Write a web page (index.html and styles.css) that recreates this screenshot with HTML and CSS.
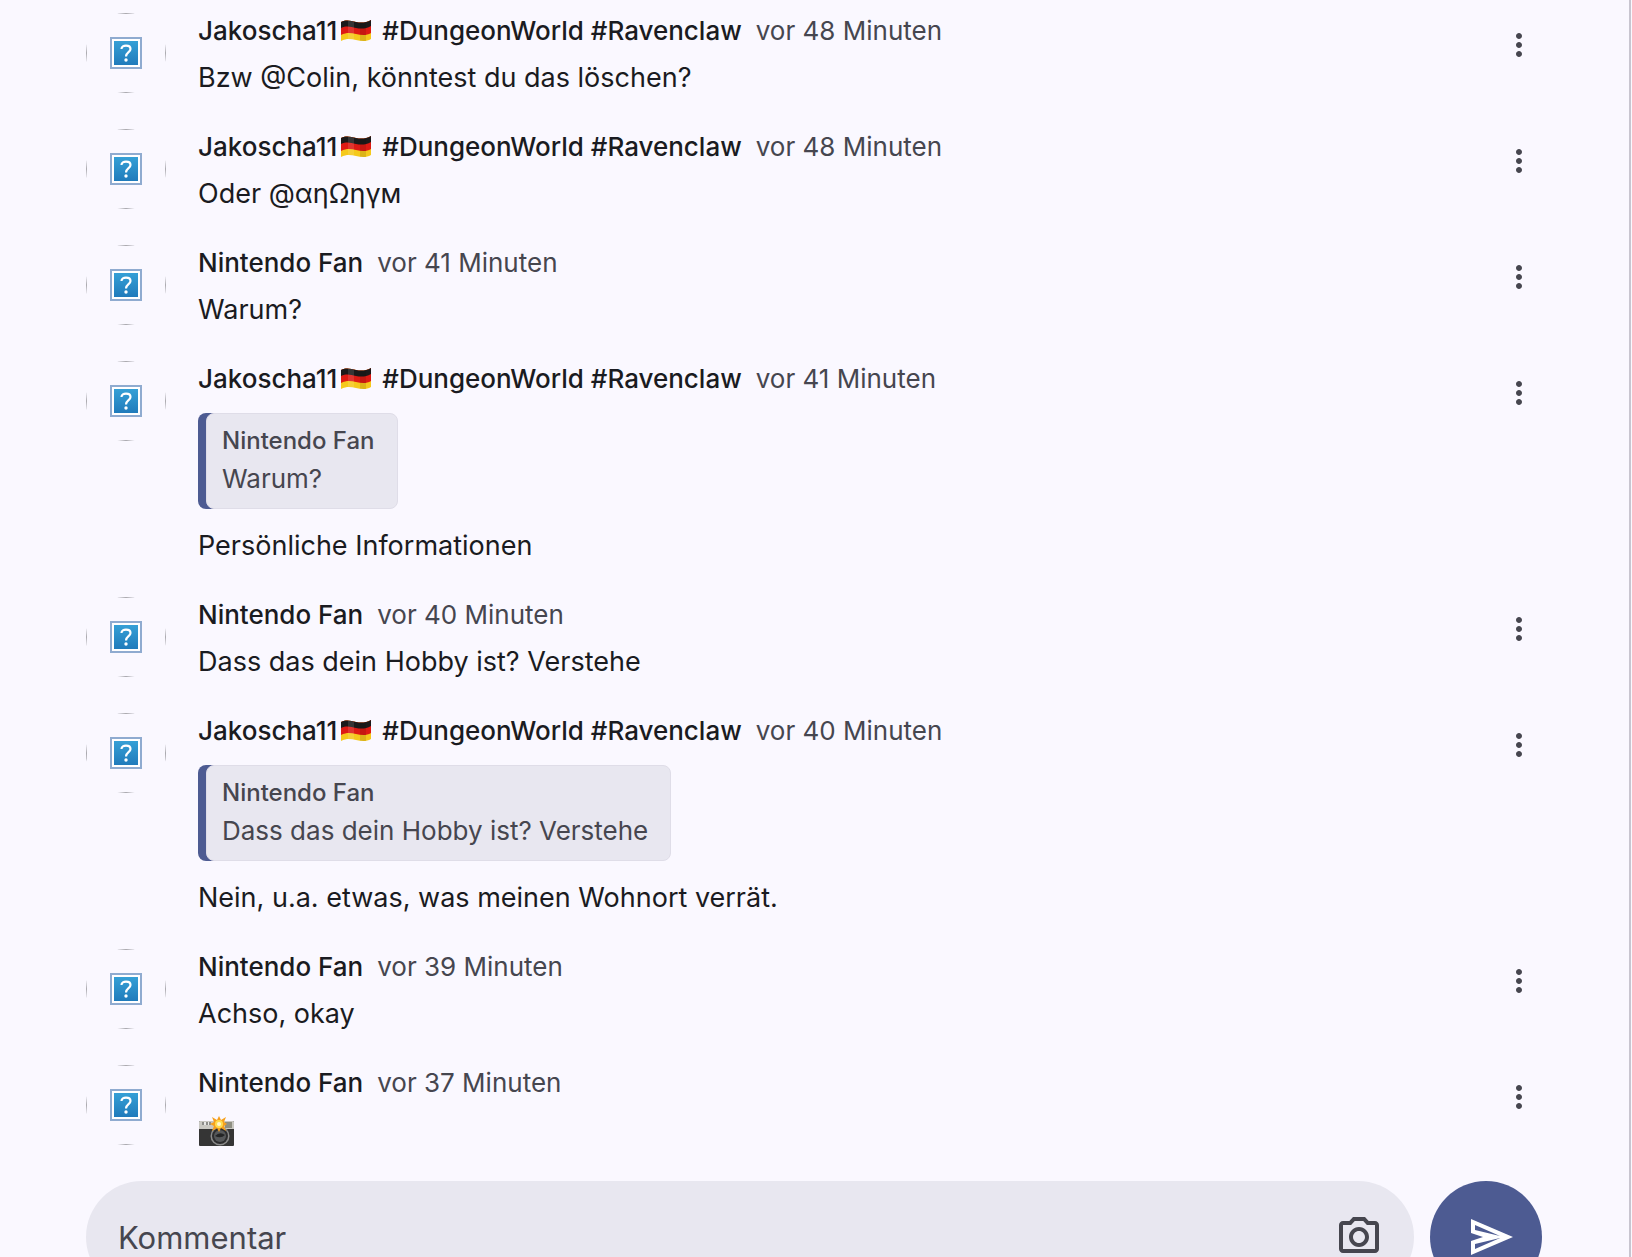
FILE: index.html
```html
<!DOCTYPE html>
<html lang="de">
<head>
  <meta charset="UTF-8">
  <meta name="viewport" content="width=device-width, initial-scale=1.0">
  <title>Kommentare</title>
  <link rel="stylesheet" href="styles.css">
</head>
<body>
  <!-- Symbole -->
  <svg class="sprite" aria-hidden="true">
    <defs>
      <linearGradient id="sky" x1="0" y1="0" x2="0" y2="1">
        <stop offset="0" stop-color="#35a0d6" />
        <stop offset="1" stop-color="#207bbb" />
      </linearGradient>
      <clipPath id="flag-shape">
        <path d="M0 2C6 -1 10 1 15 2C20 3 25 3 30 0V19C25 22 20 21 15 20C10 19 6 18 0 21Z" />
      </clipPath>
    </defs>
    <symbol id="missing" viewBox="0 0 32 32">
      <rect width="32" height="32" fill="#8fabd0" />
      <rect x="2" y="2" width="28" height="28" fill="#fff" />
      <rect x="4" y="4" width="24" height="24" fill="url(#sky)" />
      <path d="M11.500 12C11.500 7.500 20.500 7.500 20.500 12C20.500 15.200 16 15 16 19.500" fill="none" stroke="#fff" stroke-width="2.200" />
      <circle cx="16" cy="23" r="1.700" fill="#fff" />
    </symbol>
    <symbol id="flag" viewBox="0 0 30 22">
      <g clip-path="url(#flag-shape)">
        <rect width="30" height="22" fill="#f5c91c" />
        <path d="M0 0H30V13C25 16 20 15 15 14C10 13 6 12 0 15Z" fill="#dd1a14" />
        <path d="M0 0H30V6C25 9 20 9 15 8C10 7 6 5 0 8Z" fill="#1c1a1a" />
        <path d="M7 0H13V22H7Z" fill="#fff" opacity="0.120" />
        <path d="M19 0H25V22H19Z" fill="#000" opacity="0.100" />
      </g>
    </symbol>
    <symbol id="more" viewBox="0 0 24 24">
      <path d="M12 8c1.100 0 2-.9 2-2s-.9-2-2-2-2 .9-2 2 .9 2 2 2zm0 2c-1.100 0-2 .9-2 2s.9 2 2 2 2-.9 2-2-.9-2-2-2zm0 6c-1.100 0-2 .9-2 2s.9 2 2 2 2-.9 2-2-.9-2-2-2z" />
    </symbol>
  </svg>

  <main class="page">
    <section class="comments">
      <article class="comment">
        <div class="avatar"><span class="avatar-frame"><svg><use href="#missing" /></svg></span></div>
        <div class="content">
          <header><strong>Jakoscha11<svg class="flag"><use href="#flag" /></svg> #DungeonWorld #Ravenclaw</strong><time>vor 48 Minuten</time></header>
          <p>Bzw @Colin, könntest du das löschen?</p>
        </div>
        <button class="more" aria-label="Mehr"><svg><use href="#more" /></svg></button>
      </article>

      <article class="comment">
        <div class="avatar"><span class="avatar-frame"><svg><use href="#missing" /></svg></span></div>
        <div class="content">
          <header><strong>Jakoscha11<svg class="flag"><use href="#flag" /></svg> #DungeonWorld #Ravenclaw</strong><time>vor 48 Minuten</time></header>
          <p>Oder @αηΩηγм</p>
        </div>
        <button class="more" aria-label="Mehr"><svg><use href="#more" /></svg></button>
      </article>

      <article class="comment">
        <div class="avatar"><span class="avatar-frame"><svg><use href="#missing" /></svg></span></div>
        <div class="content">
          <header><strong>Nintendo Fan</strong><time>vor 41 Minuten</time></header>
          <p>Warum?</p>
        </div>
        <button class="more" aria-label="Mehr"><svg><use href="#more" /></svg></button>
      </article>

      <article class="comment">
        <div class="avatar"><span class="avatar-frame"><svg><use href="#missing" /></svg></span></div>
        <div class="content">
          <header><strong>Jakoscha11<svg class="flag"><use href="#flag" /></svg> #DungeonWorld #Ravenclaw</strong><time>vor 41 Minuten</time></header>
          <blockquote>
            <div class="quote">
              <cite>Nintendo Fan</cite>
              <span>Warum?</span>
            </div>
          </blockquote>
          <p>Persönliche Informationen</p>
        </div>
        <button class="more" aria-label="Mehr"><svg><use href="#more" /></svg></button>
      </article>

      <article class="comment">
        <div class="avatar"><span class="avatar-frame"><svg><use href="#missing" /></svg></span></div>
        <div class="content">
          <header><strong>Nintendo Fan</strong><time>vor 40 Minuten</time></header>
          <p>Dass das dein Hobby ist? Verstehe</p>
        </div>
        <button class="more" aria-label="Mehr"><svg><use href="#more" /></svg></button>
      </article>

      <article class="comment">
        <div class="avatar"><span class="avatar-frame"><svg><use href="#missing" /></svg></span></div>
        <div class="content">
          <header><strong>Jakoscha11<svg class="flag"><use href="#flag" /></svg> #DungeonWorld #Ravenclaw</strong><time>vor 40 Minuten</time></header>
          <blockquote>
            <div class="quote">
              <cite>Nintendo Fan</cite>
              <span>Dass das dein Hobby ist? Verstehe</span>
            </div>
          </blockquote>
          <p>Nein, u.a. etwas, was meinen Wohnort verrät.</p>
        </div>
        <button class="more" aria-label="Mehr"><svg><use href="#more" /></svg></button>
      </article>

      <article class="comment">
        <div class="avatar"><span class="avatar-frame"><svg><use href="#missing" /></svg></span></div>
        <div class="content">
          <header><strong>Nintendo Fan</strong><time>vor 39 Minuten</time></header>
          <p>Achso, okay</p>
        </div>
        <button class="more" aria-label="Mehr"><svg><use href="#more" /></svg></button>
      </article>

      <article class="comment">
        <div class="avatar"><span class="avatar-frame"><svg><use href="#missing" /></svg></span></div>
        <div class="content">
          <header><strong>Nintendo Fan</strong><time>vor 37 Minuten</time></header>
          <p class="emoji">
            <svg class="camera" viewBox="0 0 36 30" role="img" aria-label="Kamera mit Blitz">
              <rect y="5" width="35" height="25" rx="1" fill="#353535" />
              <path d="M0 6Q0 5 1 5H34Q35 5 35 6V13H0Z" fill="#c9c8c2" />
              <path d="M3 6H12V9H3Z" fill="#8d8d8a" />
              <path d="M5 6H7V9H5ZM9 6H10V9H9Z" fill="#e8e8e6" />
              <rect x="26" y="6" width="7" height="6" fill="#8f8f82" />
              <circle cx="21" cy="20" r="9.500" fill="#8b8b8b" />
              <circle cx="21" cy="20" r="8" fill="#2d2d2e" />
              <circle cx="21" cy="20" r="6" fill="#56585a" />
              <path d="M16 20Q21 15 26 19Q22 23 16 20Z" fill="#242526" />
              <path d="M20 0L22 4L27 1L25 6L28 8L25 10L27 15L22 12L20 16L18 12L13 15L15 10L11 8L15 6L13 1L18 4Z" fill="#f6a01c" />
              <circle cx="20" cy="8" r="4" fill="#ffdc4e" />
              <circle cx="20" cy="8" r="2" fill="#fff8cf" />
            </svg>
          </p>
        </div>
        <button class="more" aria-label="Mehr"><svg><use href="#more" /></svg></button>
      </article>
    </section>

    <form class="composer">
      <div class="field">
        <input type="text" placeholder="Kommentar" aria-label="Kommentar">
        <button type="button" class="photo" aria-label="Foto">
          <svg viewBox="0 0 24 24"><path d="M14.120 4l1.830 2H20v12H4V6h4.050l1.830-2h4.240M15 2H9L7.170 4H4c-1.100 0-2 .9-2 2v12c0 1.100.9 2 2 2h16c1.100 0 2-.9 2-2V6c0-1.100-.9-2-2-2h-3.170L15 2zm-3 7c1.650 0 3 1.350 3 3s-1.350 3-3 3-3-1.350-3-3 1.350-3 3-3m0-2c-2.760 0-5 2.240-5 5s2.240 5 5 5 5-2.240 5-5-2.240-5-5-5z" /></svg>
        </button>
      </div>
      <button type="submit" class="send" aria-label="Senden">
        <svg viewBox="0 0 24 24"><path d="M2 3V10L8 12L2 14V21L23 12ZM4 6L16.500 11.500L4 8.500ZM4 18V15.500L16.500 12.500Z" fill-rule="evenodd" /></svg>
      </button>
    </form>
  </main>
</body>
</html>
```
FILE: styles.css
```css
* {
  box-sizing: border-box;
}
body {
  margin: 0;
  height: 100vh;
  overflow: hidden;
  background-color: #faf8ff;
  color: #1a1b21;
  font-family: Inter, "Noto Sans", sans-serif;
}
svg {
  display: block;
}
.sprite {
  position: absolute;
  width: 0;
  height: 0;
}
.page {
  min-height: 100vh;
  margin-right: 1px;
  padding: 13px 87px 0 86px;
  border-right: 2px solid #c8c5d0;
}
.comment {
  display: flex;
  align-items: flex-start;
  gap: 32px;
  padding-bottom: 33px;
}
.avatar {
  flex: none;
  width: 80px;
  height: 80px;
  border-radius: 50%;
  overflow: hidden;
}
.avatar-frame {
  display: flex;
  align-items: center;
  justify-content: center;
  height: 100%;
  border: 1px solid #a9a8ae;
}
.avatar svg {
  width: 32px;
  height: 32px;
}
.content {
  flex: 1;
  min-width: 0;
}
.content header {
  display: flex;
  gap: 14px;
  font-size: 26px;
  line-height: 36px;
}
.content strong {
  font-weight: 500;
}
.content time {
  color: #46464f;
}
.flag {
  display: inline-block;
  width: 30px;
  height: 22px;
  margin: 0 4px;
  vertical-align: -2px;
}
.content p {
  height: 36px;
  margin: 11px 0 0;
  font-size: 27px;
  line-height: 36px;
}
.content .emoji {
  padding-top: 4px;
}
.camera {
  width: 36px;
  height: 30px;
  margin: 0 1px;
}
blockquote {
  width: fit-content;
  margin: 16px 0 19px;
  padding-left: 8px;
  border-radius: 8px;
  background-image: linear-gradient(to right, #4d5b92 16px, transparent 16px);
}
.quote {
  padding: 8px 22px 10px 15px;
  border: 1px solid #dfdde8;
  border-radius: 8px;
  background-color: #e8e7f0;
  color: #46464f;
  font-size: 26px;
  line-height: 38px;
}
.quote cite {
  display: block;
  font-size: 24px;
  font-style: normal;
  font-weight: 500;
}
.quote span {
  display: block;
}
button {
  padding: 0;
  border: none;
  background: none;
  color: #46464f;
  cursor: pointer;
}
button svg {
  fill: currentColor;
}
.more {
  display: flex;
  align-items: center;
  justify-content: center;
  width: 46px;
  height: 64px;
}
.more svg {
  width: 36px;
  height: 36px;
}
.composer {
  display: flex;
  gap: 16px;
}
.field {
  flex: 1;
  display: flex;
  align-items: center;
  height: 112px;
  padding: 0 31px 0 32px;
  border-radius: 56px;
  background-color: #e8e7f0;
}
.field input {
  flex: 1;
  min-width: 0;
  padding: 0;
  border: none;
  outline: none;
  background: none;
  color: #1a1b21;
  font: inherit;
  font-size: 31px;
}
.field input::placeholder {
  color: #46464f;
  opacity: 1;
}
.composer svg {
  width: 48px;
  height: 48px;
}
.send {
  display: flex;
  align-items: center;
  justify-content: center;
  width: 112px;
  height: 112px;
  padding-left: 10px;
  border-radius: 50%;
  background-color: #4d5b92;
  color: #fff;
}
```
